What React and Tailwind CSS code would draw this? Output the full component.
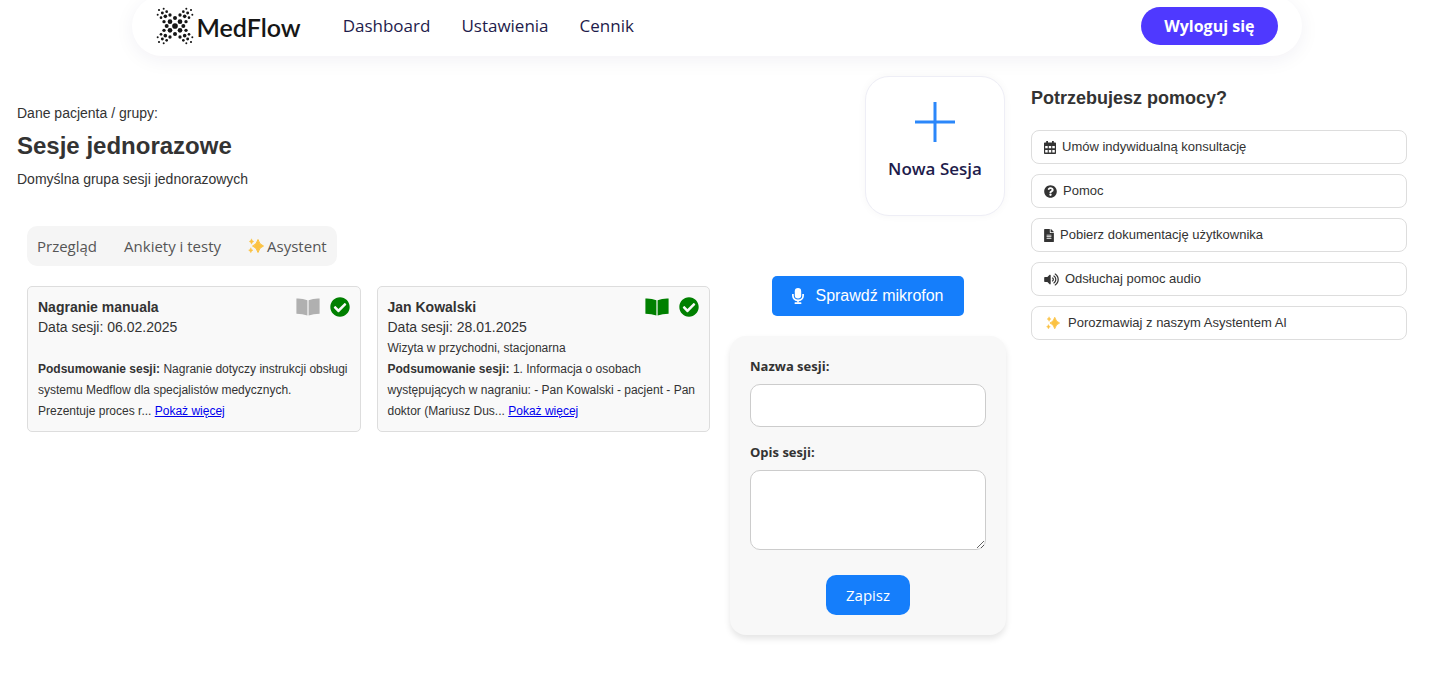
import { FaCheckCircle, FaFileAlt, FaQuestionCircle, FaVolumeUp } from "react-icons/fa";

const quadrantDots = [
  [15, 13, 7],
  [33, 13, 5],
  [15, 33, 5],
  [29, 29, 5.4],
  [25, 43, 4],
  [42, 25, 4],
  [38, 39, 4.4],
  [52, 34, 3],
  [34, 52, 3],
  [48, 48, 3.2],
];

function Logo() {
  const dots = quadrantDots.flatMap(([x, y, r]) => [
    [x, y, r],
    [-x, y, r],
    [x, -y, r],
    [-x, -y, r],
  ]);
  const axis = [
    [0, 0, 8.5],
    [25, 0, 6],
    [-25, 0, 6],
    [0, 24, 6],
    [0, -24, 6],
  ];
  return (
    <svg viewBox="-57 -57 114 114" className="size-[38px] shrink-0" fill="#161616" aria-hidden="true">
      {[...axis, ...dots].map(([x, y, r]) => (
        <circle key={`${x},${y}`} cx={x} cy={y} r={r} />
      ))}
    </svg>
  );
}

function Sparkles({ className }) {
  return (
    <svg viewBox="0 0 16 16" className={className} fill="#fbc243" aria-hidden="true">
      <path d="M10 1.5Q11.3 6.7 15.5 8Q11.3 9.3 10 14.5Q8.7 9.3 4.5 8Q8.7 6.7 10 1.5Z" stroke="#fbc243" strokeWidth="1" strokeLinejoin="round" />
      <path d="M3.5 .8Q3.9 3 5.8 3.5Q3.9 4 3.5 6.2Q3.1 4 1.2 3.5Q3.1 3 3.5 .8Z" stroke="#fbc243" strokeWidth=".4" />
      <path d="M2.8 9.7Q3.2 11.7 5 12.2Q3.2 12.7 2.8 14.8Q2.4 12.7 .6 12.2Q2.4 11.7 2.8 9.7Z" stroke="#fbc243" strokeWidth=".4" />
    </svg>
  );
}

function Calendar({ className }) {
  return (
    <svg viewBox="0 0 12 13" className={className} fill="currentColor" aria-hidden="true">
      <path
        fillRule="evenodd"
        d="M2.2 0H4V1.5H8V0H9.8V1.5H11.2Q12 1.5 12 2.3V12.2Q12 13 11.2 13H.8Q0 13 0 12.2V2.3Q0 1.5 .8 1.5H2.2ZM1.2 5V7.2H3.7V5ZM4.8 5V7.2H7.2V5ZM8.3 5V7.2H10.8V5ZM1.2 9V11.4H3.7V9ZM4.8 9V11.4H7.2V9ZM8.3 9V11.4H10.8V9Z"
      />
    </svg>
  );
}

function Book({ className }) {
  return (
    <svg viewBox="0 0 24 18" className={className} fill="currentColor" aria-hidden="true">
      <path d="M.4 .5Q6.5 .2 11.4 2.2V17.6Q6.5 15.9 .4 15.8ZM23.6 .5Q17.5 .2 12.6 2.2V17.6Q17.5 15.9 23.6 15.8Z" />
    </svg>
  );
}

function Microphone({ className }) {
  return (
    <svg viewBox="0 0 12 16" className={className} fill="currentColor" aria-hidden="true">
      <rect x="2.8" y="0" width="6.4" height="10.4" rx="3.2" />
      <path d="M.9 6V7.8A5.1 4.6 0 0 0 11.1 7.8V6M6 12.4V14.6" fill="none" stroke="currentColor" strokeWidth="1.7" />
      <rect x="2.6" y="14.2" width="6.8" height="1.8" rx=".6" />
    </svg>
  );
}

function SessionCard({ title, date, note, summary, bookClass }) {
  return (
    <article className="flex-1 rounded-[5px] border border-[#ddd] bg-[#f9f9f9] px-2.5 pt-2.5 pb-[9px] text-[#333]">
      <div className="mb-px flex justify-between">
        <div className="text-sm leading-5">
          <h2 className="font-bold">{title}</h2>
          <p>Data sesji: {date}</p>
        </div>
        <div className="flex h-5 items-center gap-2.5">
          <Book className={bookClass} />
          <FaCheckCircle className="size-5 text-[#008000]" />
        </div>
      </div>
      <p className="min-h-[21px] text-xs leading-[21px]">{note}</p>
      <p className="text-xs leading-[21px]">
        <strong>Podsumowanie sesji:</strong> {summary}{" "}
        <a href="#wiecej" className="text-[#0000ee] underline">Pokaż więcej</a>
      </p>
    </article>
  );
}

const helpLinks = [
  { label: "Umów indywidualną konsultację", icon: <Calendar className="h-[13px] w-3" />, gap: "gap-1.5" },
  { label: "Pomoc", icon: <FaQuestionCircle className="size-[13px]" />, gap: "gap-1.5" },
  { label: "Pobierz dokumentację użytkownika", icon: <FaFileAlt className="h-[13px] w-[10px]" />, gap: "gap-1.5" },
  { label: "Odsłuchaj pomoc audio", icon: <FaVolumeUp className="h-[13px] w-[15px]" />, gap: "gap-1.5" },
  { label: "Porozmawiaj z naszym Asystentem AI", icon: <Sparkles className="ml-0.5 size-[14px]" />, gap: "gap-2" },
];

export default function App() {
  return (
    <div className="bg-white font-['Liberation_Sans',Arial,sans-serif] text-[#333]">
      <header className="mx-auto -mt-1 flex h-[60px] max-w-[1170px] items-center rounded-full bg-white px-6 font-['Open_Sans','Noto_Sans',sans-serif] shadow-[0_4px_20px_rgba(30,20,90,0.06)]">
        <a href="#start" className="flex items-center gap-[3px] text-[#161616]">
          <Logo />
          <span className="pt-0.5 font-[Lato,sans-serif] text-[25px] leading-8 font-semibold">MedFlow</span>
        </a>
        <nav className="ml-[42px] flex gap-[31px] text-[17px] text-[#1e1b4b]">
          <a href="#dashboard">Dashboard</a>
          <a href="#ustawienia">Ustawienia</a>
          <a href="#cennik">Cennik</a>
        </nav>
        <button className="ml-auto h-[38px] rounded-full bg-[#4f39ff] px-[23px] text-base font-bold text-white">Wyloguj się</button>
      </header>

      <main className="flex gap-[25px] pt-5 pr-[26px] pb-10 pl-[17px]">
        <div className="min-w-0 flex-1">
          <section className="flex justify-between">
            <div className="pt-[27px] text-sm leading-5">
              <p>Dane pacjenta / grupy:</p>
              <h1 className="my-2 text-2xl leading-[30px] font-bold">Sesje jednorazowe</h1>
              <p>Domyślna grupa sesji jednorazowych</p>
            </div>
            <button className="mr-px flex size-[140px] flex-col items-center rounded-[24px] border border-[#eeeef6] bg-white pt-[25px] font-['Open_Sans','Noto_Sans',sans-serif] text-[17px] font-semibold text-[#1e1b4b] shadow-[0_0_8px_rgba(0,0,0,0.04)]">
              <svg viewBox="0 0 40 40" className="mb-3.5 size-10" stroke="#2b87fa" strokeWidth="3" aria-hidden="true">
                <path d="M20 0V40M0 20H40" />
              </svg>
              Nowa Sesja
            </button>
          </section>

          <section className="mt-2.5 flex gap-5 pl-2.5">
            <div className="min-w-0 flex-1">
              <div className="mb-5 inline-flex h-10 items-center gap-[27px] rounded-[10px] bg-[#f5f5f5] px-2.5 font-['Open_Sans','Noto_Sans',sans-serif] text-[15px] text-[#555]">
                <button>Przegląd</button>
                <button>Ankiety i testy</button>
                <button className="flex items-center gap-[3px]">
                  <Sparkles className="size-4" />
                  Asystent
                </button>
              </div>
              <div className="flex gap-4">
                <SessionCard
                  title="Nagranie manuala"
                  date="06.02.2025"
                  note=""
                  summary="Nagranie dotyczy instrukcji obsługi systemu Medflow dla specjalistów medycznych. Prezentuje proces r..."
                  bookClass="h-[18px] w-6 text-[#b0b0b0]"
                />
                <SessionCard
                  title="Jan Kowalski"
                  date="28.01.2025"
                  note="Wizyta w przychodni, stacjonarna"
                  summary="1. Informacja o osobach występujących w nagraniu: - Pan Kowalski - pacjent - Pan doktor (Mariusz Dus..."
                  bookClass="h-[18px] w-6 text-[#008000]"
                />
              </div>
            </div>

            <div className="flex w-[276px] flex-col items-center pt-[50px]">
              <button className="flex h-10 items-center gap-[11px] rounded-[5px] bg-[#157efb] px-5 text-base text-white">
                <Microphone className="h-4 w-3" />
                Sprawdź mikrofon
              </button>
              <form className="mt-5 flex w-full flex-col rounded-2xl bg-[#f8f8f8] p-5 font-['Open_Sans','Noto_Sans',sans-serif] shadow-[0_4px_6px_rgba(0,0,0,0.1)]">
                <label htmlFor="nazwa" className="text-[13px] leading-5 font-bold">Nazwa sesji:</label>
                <input id="nazwa" className="mt-2 h-[43px] rounded-[10px] border border-[#ccc] bg-white px-2.5" />
                <label htmlFor="opis" className="mt-[15px] text-[13px] leading-5 font-bold">Opis sesji:</label>
                <textarea id="opis" className="mt-2 h-20 resize rounded-[10px] border border-[#ccc] bg-white p-2.5" />
                <button type="button" className="mt-[25px] h-10 self-center rounded-[10px] bg-[#157efb] px-5 text-[15px] text-white">Zapisz</button>
              </form>
            </div>
          </section>
        </div>

        <aside className="w-[376px] shrink-0 pt-2.5">
          <h2 className="text-lg leading-6 font-bold">Potrzebujesz pomocy?</h2>
          <ul className="mt-5 flex flex-col gap-2.5">
            {helpLinks.map(({ label, icon, gap }) => (
              <li key={label}>
                <a href="#pomoc" className={`flex h-[34px] items-center rounded-lg border border-[#ddd] px-3 text-[13px] ${gap}`}>
                  {icon}
                  {label}
                </a>
              </li>
            ))}
          </ul>
        </aside>
      </main>
    </div>
  );
}
